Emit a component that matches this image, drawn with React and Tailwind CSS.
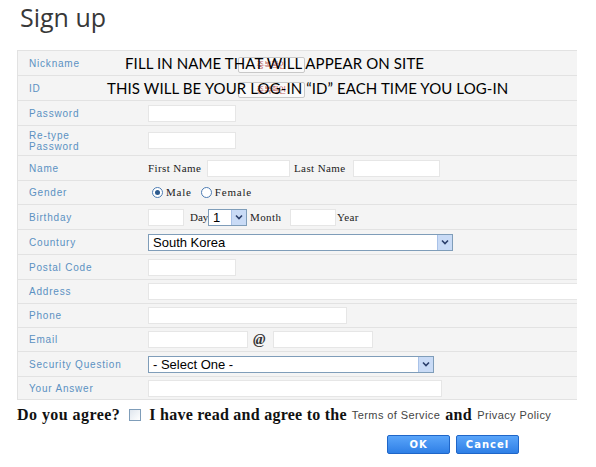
import React from 'react';

const labelCls = 'w-[130px] shrink-0 pl-[11px] text-[10px] leading-[11px] tracking-[0.8px] text-[#5b91c2]';
const inputCls = 'h-[17px] bg-white border border-[#e6e6e6]';
const serifCls = "font-['Liberation_Serif',serif] text-[11px] tracking-[0.4px] text-[#222]";

const Row = ({ label, h = 'h-[25px]', children, note }) => (
  <div className={`relative flex items-center ${h} border-b border-[#e2e2e2]`}>
    <div className={labelCls}>{label}</div>
    <div className="flex flex-1 items-center">{children}</div>
    {note}
  </div>
);

const Arrow = () => (
  <span className="flex h-full w-[15px] items-center justify-center border-l border-[#a9c2e8] bg-[#c9dbf6]">
    <svg width="8" height="6" viewBox="0 0 8 6">
      <path d="M1 1.5 L4 4.5 L7 1.5" fill="none" stroke="#2b3f6b" strokeWidth="1.6" />
    </svg>
  </span>
);

const Select = ({ w, text }) => (
  <div className={`flex h-[17px] ${w} items-center justify-between border border-[#7f9db9] bg-white`}>
    <span className="pl-[4px] text-[13px] leading-none text-black">{text}</span>
    <Arrow />
  </div>
);

const Radio = ({ checked }) => (
  <span className="flex h-[11px] w-[11px] items-center justify-center rounded-full border border-[#4d7cb3] bg-white">
    {checked && <span className="h-[5px] w-[5px] rounded-full bg-[#2d5a8e]" />}
  </span>
);

const CheckBtn = () => (
  <span className="absolute left-[220px] top-[6px] flex h-[16px] w-[67px] items-center justify-center rounded-[2px] border border-[#c8c8c8] bg-[#fafafa] font-['Noto_Sans_CJK_KR',sans-serif] text-[8px] text-[#c06060]">
    중복확인
  </span>
);

const Note = ({ left, children }) => (
  <span className="pointer-events-none absolute top-[3px] font-['Lato',sans-serif] text-[15px] leading-[18px] tracking-[0.1px] text-black" style={{ left }}>
    {children}
  </span>
);

export default function App() {
  return (
    <div className="relative h-[467px] w-[596px] overflow-hidden bg-white font-['Liberation_Sans',sans-serif]">
      <h1 className="pl-[20px] font-['Open_Sans',sans-serif] text-[25px] leading-[34px] text-[#383838]">Sign up</h1>

      <div className="ml-[17px] mt-[16px] w-[560px] border-l border-t border-[#e2e2e2] bg-[#f4f4f4]">
        <Row label="Nickname" note={<><CheckBtn /><Note left={107}>FILL IN NAME THAT WILL APPEAR ON SITE</Note></>} />
        <Row label="ID" note={<><CheckBtn /><Note left={89}>THIS WILL BE YOUR LOG-IN “ID” EACH TIME YOU LOG-IN</Note></>} />
        <Row label="Password">
          <div className={`${inputCls} w-[88px]`} />
        </Row>
        <Row label={<>Re-type<br />Password</>} h="h-[30px]">
          <div className={`${inputCls} w-[88px]`} />
        </Row>
        <Row label="Name">
          <span className={`${serifCls} w-[59px]`}>First Name</span>
          <div className={`${inputCls} w-[83px]`} />
          <span className={`${serifCls} ml-[4px] w-[59px]`}>Last Name</span>
          <div className={`${inputCls} w-[87px]`} />
        </Row>
        <Row label="Gender" h="h-[24px]">
          <span className="ml-[4px] flex items-center gap-[3px]">
            <Radio checked />
            <span className={`${serifCls} tracking-[0.8px]`}>Male</span>
          </span>
          <span className="ml-[9px] flex items-center gap-[3px]">
            <Radio />
            <span className={`${serifCls} tracking-[0.8px]`}>Female</span>
          </span>
        </Row>
        <Row label="Birthday">
          <div className={`${inputCls} w-[36px]`} />
          <span className={`${serifCls} ml-[6px] w-[18px] tracking-normal`}>Day</span>
          <Select w="w-[39px]" text="1" />
          <span className={`${serifCls} ml-[3px] w-[40px]`}>Month</span>
          <div className={`${inputCls} w-[46px]`} />
          <span className={`${serifCls} ml-[1px]`}>Year</span>
        </Row>
        <Row label="Countury">
          <Select w="w-[305px]" text="South Korea" />
        </Row>
        <Row label="Postal Code">
          <div className={`${inputCls} w-[88px]`} />
        </Row>
        <Row label="Address" h="h-[24px]">
          <div className={`${inputCls} flex-1 border-r-0`} />
        </Row>
        <Row label="Phone" h="h-[24px]">
          <div className={`${inputCls} w-[199px]`} />
        </Row>
        <Row label="Email" h="h-[24px]">
          <div className={`${inputCls} w-[100px]`} />
          <span className="ml-[5px] w-[20px] font-['Liberation_Serif',serif] text-[15px] font-bold italic text-[#333]">@</span>
          <div className={`${inputCls} w-[100px]`} />
        </Row>
        <Row label="Security Question">
          <Select w="w-[286px]" text="- Select One -" />
        </Row>
        <Row label="Your Answer" h="h-[23px]">
          <div className={`${inputCls} w-[294px]`} />
        </Row>
      </div>

      <div className="ml-[17px] mt-[5px] flex items-center font-['Liberation_Serif',serif] text-[16px] font-bold leading-[20px] text-[#111]">
        <span className="tracking-[0.45px]">Do you agree?</span>
        <span className="ml-[9px] h-[12px] w-[12px] border border-[#7f9db9] bg-gradient-to-br from-[#dfe6ee] to-white" />
        <span className="ml-[8px] tracking-[0.25px]">I have read and agree to the</span>
        <span className="ml-[5px] font-['Liberation_Sans',sans-serif] text-[11px] font-normal tracking-[0.4px] text-[#444]">Terms of Service</span>
        <span className="ml-[5px] tracking-[0.4px]">and</span>
        <span className="ml-[5px] font-['Liberation_Sans',sans-serif] text-[11px] font-normal tracking-[0.4px] text-[#444]">Privacy Policy</span>
      </div>

      <div className="ml-[387px] mt-[10px] flex gap-[6px]">
        <button className="h-[19px] w-[63px] rounded-[2px] border border-[#1f66c8] bg-gradient-to-b from-[#5aa5fa] to-[#2e7fe6] font-['DejaVu_Sans',sans-serif] text-[10px] font-bold tracking-[1px] text-white">
          OK
        </button>
        <button className="h-[19px] w-[63px] rounded-[2px] border border-[#1f66c8] bg-gradient-to-b from-[#5aa5fa] to-[#2e7fe6] font-['DejaVu_Sans',sans-serif] text-[10px] font-bold tracking-[1px] text-white">
          Cancel
        </button>
      </div>
    </div>
  );
}
